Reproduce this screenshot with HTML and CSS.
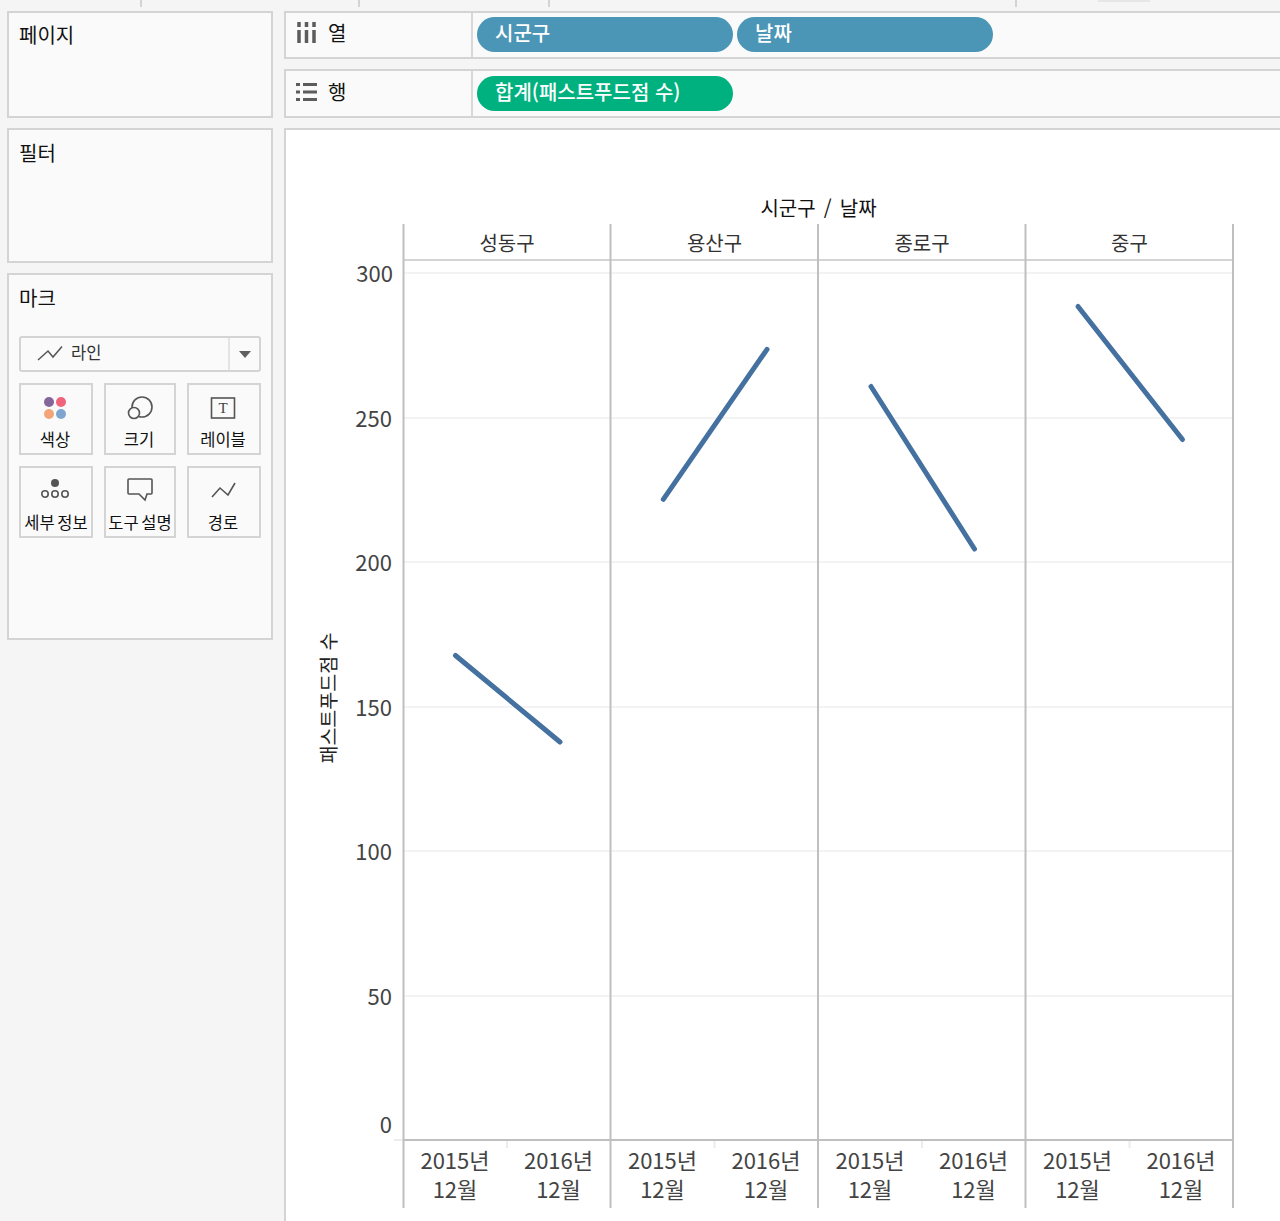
FILE: index.html
```html
<!DOCTYPE html>
<html lang="ko">
<head>
<meta charset="utf-8">
<title>시트</title>
<link rel="stylesheet" href="styles.css">
</head>
<body>
<svg class="top-strip" viewBox="0 0 1280 11" aria-hidden="true">
  <path class="tick" d="M141 0V7M359 0V7M549 0V7M1016 0V7"/>
  <rect class="tab-mark" x="1098" y="0" width="52" height="2"/>
</svg>
<div class="workspace">
  <aside class="side">
    <section class="panel panel-pages"><h2 class="panel-title">페이지</h2></section>
    <section class="panel panel-filters"><h2 class="panel-title">필터</h2></section>
    <section class="panel panel-marks">
      <h2 class="panel-title">마크</h2>
      <div class="mark-select">
        <div class="mark-select-value">
          <svg class="line-icon" viewBox="0 0 26 16"><path d="M1 14L11 5L16 11L25 0.500"/></svg>
          <span class="mark-select-text">라인</span>
        </div>
        <div class="mark-select-arrow"><span class="caret"></span></div>
      </div>
      <div class="mark-grid">
        <div class="mark-card">
          <svg class="mark-icon" viewBox="0 0 30 30"><circle cx="9" cy="9" r="5" fill="#84679a"/><circle cx="21" cy="9" r="5" fill="#f0657c"/><circle cx="9" cy="21" r="5" fill="#f2a578"/><circle cx="21" cy="21" r="5" fill="#7ea6cf"/></svg>
          <span>색상</span>
        </div>
        <div class="mark-card">
          <svg class="mark-icon" viewBox="0 0 30 30"><circle class="ico" cx="18" cy="14" r="10"/><circle class="ico ico-fill" cx="10" cy="20" r="5.500"/></svg>
          <span>크기</span>
        </div>
        <div class="mark-card">
          <svg class="mark-icon" viewBox="0 0 30 30"><rect class="ico" x="3.500" y="5" width="23" height="20"/><text class="ico-t" x="15" y="20">T</text></svg>
          <span>레이블</span>
        </div>
        <div class="mark-card mark-card-wide">
          <svg class="mark-icon" viewBox="0 0 30 30"><circle cx="14" cy="7" r="4" fill="#555"/><circle class="ico" cx="4" cy="18" r="3.200"/><circle class="ico" cx="14" cy="18" r="3.200"/><circle class="ico" cx="24" cy="18" r="3.200"/></svg>
          <span>세부 정보</span>
        </div>
        <div class="mark-card mark-card-wide">
          <svg class="mark-icon" viewBox="0 0 30 30"><path class="ico" d="M4 3H26Q27 3 27 4V17Q27 18 26 18H22L20 24L14 18H4Q3 18 3 17V4Q3 3 4 3Z"/></svg>
          <span>도구 설명</span>
        </div>
        <div class="mark-card">
          <svg class="mark-icon" viewBox="0 0 30 30"><path class="ico" d="M4 21L12 12L20 19L27 7"/></svg>
          <span>경로</span>
        </div>
      </div>
    </section>
  </aside>
  <main class="main">
    <div class="shelf">
      <div class="shelf-label">
        <svg class="shelf-icon icon-cols" viewBox="0 0 19 21"><path class="shelf-glyph" d="M2 0V5M9.500 0V5M17 0V5M2 8V21M9.500 8V21M17 8V21"/></svg>
        <span>열</span>
      </div>
      <div class="shelf-pills">
        <span class="pill pill-blue">시군구</span>
        <span class="pill pill-blue">날짜</span>
      </div>
    </div>
    <div class="shelf shelf-rows">
      <div class="shelf-label">
        <svg class="shelf-icon icon-rows" viewBox="0 0 21 18"><path class="shelf-glyph" d="M0 1.500H4M0 9H4M0 16.500H4M7 1.500H21M7 9H21M7 16.500H21"/></svg>
        <span>행</span>
      </div>
      <div class="shelf-pills">
        <span class="pill pill-green">합계(패스트푸드점 수)</span>
      </div>
    </div>
    <section class="viz">
      <svg class="chart" viewBox="286 130 994 1091">
        <g class="grid">
          <path d="M404 273H1233M404 418H1233M404 562H1233M404 707H1233M404 851H1233M404 996H1233"/>
        </g>
        <path class="head-rule" d="M404 260H1233"/>
        <path class="base-faint" d="M394 1140H404M507 1140V1148M714.500 1140V1148M922 1140V1148M1129.500 1140V1148"/>
        <path class="frame" d="M403.500 224V1208M610.500 224V1208M818 224V1208M1025.500 224V1208M1233 224V1208M404 1140H1233"/>
        <g class="series">
          <path d="M455.500 655.500L560 742"/>
          <path d="M663.300 499.300L767 349.300"/>
          <path d="M871 386.500L974.500 549"/>
          <path d="M1078 306.500L1182.500 439.500"/>
        </g>
        <text class="t-title" x="818.500" y="216">시군구 / 날짜</text>
        <g class="t-head">
          <text x="507" y="251">성동구</text>
          <text x="714.500" y="251">용산구</text>
          <text x="922" y="251">종로구</text>
          <text x="1129.500" y="251">중구</text>
        </g>
        <text class="t-axis-title" transform="translate(336 698) rotate(-90)">패스트푸드점 수</text>
        <g class="t-y">
          <text x="393" y="282">300</text>
          <text x="392" y="427">250</text>
          <text x="392" y="571">200</text>
          <text x="392" y="716">150</text>
          <text x="392" y="860">100</text>
          <text x="392" y="1005">50</text>
          <text x="392" y="1133">0</text>
        </g>
        <g class="t-x">
          <text x="455" y="1169">2015년</text><text x="455" y="1198">12월</text>
          <text x="558.500" y="1169">2016년</text><text x="558.500" y="1198">12월</text>
          <text x="662.500" y="1169">2015년</text><text x="662.500" y="1198">12월</text>
          <text x="766" y="1169">2016년</text><text x="766" y="1198">12월</text>
          <text x="870" y="1169">2015년</text><text x="870" y="1198">12월</text>
          <text x="973.500" y="1169">2016년</text><text x="973.500" y="1198">12월</text>
          <text x="1077.500" y="1169">2015년</text><text x="1077.500" y="1198">12월</text>
          <text x="1181" y="1169">2016년</text><text x="1181" y="1198">12월</text>
        </g>
      </svg>
    </section>
  </main>
</div>
</body>
</html>
```

FILE: styles.css
```css
* { box-sizing: border-box; }
html, body { margin: 0; height: 1221px; overflow: hidden; }
body {
  background: #f5f5f5;
  color: #222;
  font-family: "Noto Sans CJK KR", "Liberation Sans", sans-serif;
}
.top-strip { display: block; width: 1280px; height: 11px; }
.tick { stroke: #d4d4d4; stroke-width: 2; fill: none; }
.tab-mark { fill: #e6e6e6; }

.workspace { display: flex; height: 1210px; padding-left: 7px; gap: 11px; }
.side { width: 266px; flex: none; display: flex; flex-direction: column; gap: 10px; }
.panel { background: #fafafa; border: 2px solid #d4d4d4; padding: 10px 10px 0; }
.panel-pages { height: 107px; padding-top: 9px; }
.panel-filters { height: 135px; }
.panel-marks { height: 367px; }
.panel-title { margin: 0; font-size: 20px; font-weight: 400; line-height: 26px; color: #111; }

.mark-select {
  display: flex; height: 36px; margin-top: 25px;
  border: 2px solid #d4d4d4; border-radius: 3px; background: #fafafa;
}
.mark-select-value {
  flex: 1; display: flex; align-items: center; gap: 8px; padding-left: 16px;
  font-size: 16.500px; color: #333;
}
.mark-select-text { margin-bottom: 4px; }
.line-icon { width: 26px; height: 16px; }
.line-icon path { fill: none; stroke: #555; stroke-width: 1.500; }
.mark-select-arrow {
  width: 31px; border-left: 2px solid #e4e4e4;
  display: flex; align-items: center; justify-content: center;
}
.caret { width: 0; height: 0; border-left: 6px solid transparent; border-right: 6px solid transparent; border-top: 7px solid #5f5f5f; }

.mark-grid {
  display: grid; grid-template-columns: 74px 72px 74px; grid-auto-rows: 72px;
  column-gap: 11px; row-gap: 11px; margin-top: 11px;
}
.mark-card {
  border: 2px solid #d4d4d4; background: #fafafa;
  display: flex; flex-direction: column; align-items: center;
  padding: 8px 2px 0 0; font-size: 16.500px; line-height: 22px; white-space: nowrap; color: #111;
}
.mark-card-wide { padding-right: 0; word-spacing: -2px; }
.mark-icon { width: 30px; height: 30px; margin-bottom: 5px; flex: none; }
.ico { fill: none; stroke: #555; stroke-width: 1.600; }
.ico-fill { fill: #fafafa; }
.ico-t { font-family: "Liberation Serif", serif; font-size: 15px; fill: #444; text-anchor: middle; }

.main { flex: 1; min-width: 0; display: flex; flex-direction: column; gap: 10px; margin-right: -10px; }
.shelf { height: 48px; display: flex; background: #fafafa; border: 2px solid #d4d4d4; }
.shelf-rows { height: 49px; }
.shelf-label {
  width: 187px; flex: none; border-right: 2px solid #d8d8d8;
  display: flex; align-items: center; gap: 12px; padding-left: 11px; padding-bottom: 5px;
  font-size: 20px; color: #111;
}
.shelf-rows .shelf-label { padding-bottom: 4px; gap: 11px; }
.shelf-icon { flex: none; }
.icon-cols { width: 19px; height: 21px; }
.icon-rows { width: 21px; height: 18px; margin-left: -1px; }
.shelf-glyph { stroke: #5c5c5c; stroke-width: 3.500; fill: none; }
.icon-rows .shelf-glyph { stroke-width: 3; }
.shelf-pills { display: flex; gap: 4px; padding: 4px 0 0 4px; }
.shelf-rows .shelf-pills { padding-top: 5px; }
.pill {
  width: 256px; height: 35px; border-radius: 18px; color: #fff;
  font-size: 20px; font-weight: 500; line-height: 32px; padding-left: 18px; white-space: nowrap;
}
.pill-blue { background: #4b96b6; }
.pill-green { background: #00b180; }

.viz { flex: 1; min-height: 0; background: #fff; border: 2px solid #d4d4d4; border-right: 0; border-bottom: 0; }
.chart { display: block; width: 994px; height: 1091px; }
.grid path { stroke: #efefef; stroke-width: 1.500; fill: none; }
.head-rule { stroke: #d4d4d4; stroke-width: 2; fill: none; }
.base-faint { stroke: #ececec; stroke-width: 2; fill: none; }
.frame { stroke: #bfbfbf; stroke-width: 2; fill: none; }
.series path { stroke: #44719f; stroke-width: 5; stroke-linecap: round; fill: none; }

.t-title { font-size: 20px; fill: #111; text-anchor: middle; word-spacing: 2.500px; }
.t-head text { font-size: 20px; fill: #333; text-anchor: middle; }
.t-axis-title { font-size: 19.500px; fill: #222; text-anchor: middle; }
.t-y text { font-size: 22px; fill: #444; text-anchor: end; }
.t-x text { font-size: 22px; fill: #444; text-anchor: middle; }
```
